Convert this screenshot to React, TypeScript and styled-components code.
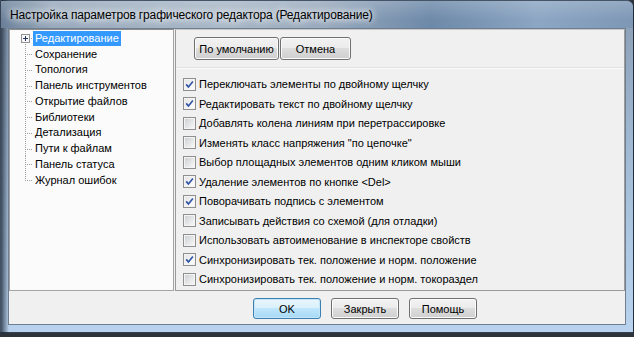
import styled, { createGlobalStyle } from 'styled-components';

const GlobalStyle = createGlobalStyle`
	html, body {
		margin: 0;
		padding: 0;
		background: #2d333b;
	}
	* {
		box-sizing: border-box;
	}
`;

const Screen = styled.div`
	width: 634px;
	height: 337px;
	background: #2d333b;
	overflow: hidden;
`;

const Window = styled.div`
	width: 634px;
	height: 333px;
	display: flex;
	flex-direction: column;
	border-radius: 0 7px 0 0;
	border: 1px solid rgba(20, 30, 45, 0.7);
	background:
		linear-gradient(90deg, rgba(25, 35, 50, 0.75) 0, rgba(25, 35, 50, 0) 8px),
		linear-gradient(180deg, #7f95ad 0, #8ea3ba 28px, #a6bfd9 55%, #b9d3ef 100%);
	font-family: "Liberation Sans", Arial, sans-serif;
`;

const TitleBar = styled.div`
	height: 27px;
	display: flex;
	align-items: center;
	padding-left: 9px;
	font-size: 12px;
	color: #000;
	background:
		linear-gradient(180deg, rgba(255, 255, 255, 0.18), rgba(255, 255, 255, 0) 70%),
		linear-gradient(90deg, #6a8099 0%, #97a9bc 8%, #a9b8c8 35%, #9aabbe 50%, #6d89a9 68%, #8ca6c3 85%, #7d97b5 100%);
	border-radius: 0 6px 0 0;
`;

const TitleText = styled.span`
	letter-spacing: -0.15px;
	text-shadow: 0 0 6px rgba(255, 255, 255, 0.95), 0 0 10px rgba(255, 255, 255, 0.8), 0 0 14px rgba(255, 255, 255, 0.6);
	white-space: nowrap;
`;

const Client = styled.div`
	margin: 0 7px 7px 7px;
	flex: 1;
	display: flex;
	flex-direction: column;
	background: #f0f0f0;
	border: 1px solid #6f7f90;
	font-size: 11px;
`;

const Panels = styled.div`
	height: 262px;
	display: flex;
	gap: 1px;
`;

const TreePanel = styled.div`
	width: 165px;
	background: #fbfbfb;
	border: 1px solid #a3a3a3;
	border-top-color: #8c8c8c;
	padding: 0.4px 0 0 11px;
	font-size: 11px;
`;

const TreeRow = styled.div`
	height: 15.75px;
	display: flex;
	align-items: center;
`;

const Connector = styled.span<{ $first?: boolean; $last?: boolean }>`
	position: relative;
	width: 12px;
	height: 100%;
	flex: none;

	&::before {
		content: '';
		position: absolute;
		left: 4px;
		width: 1px;
		top: ${(p) => (p.$first ? '12px' : '0')};
		bottom: ${(p) => (p.$last ? '7px' : '0')};
		background-image: linear-gradient(to bottom, #a0a0a0 50%, transparent 50%);
		background-size: 1px 2px;
	}

	&::after {
		content: '';
		position: absolute;
		top: 8px;
		left: ${(p) => (p.$first ? '9px' : '5px')};
		right: 0;
		height: 1px;
		background-image: linear-gradient(to right, #a0a0a0 50%, transparent 50%);
		background-size: 2px 1px;
		background-position: 1px 0;
	}
`;

const Expander = styled.svg`
	position: absolute;
	left: 0;
	top: 4px;
	z-index: 1;
`;

const TreeLabel = styled.span<{ $selected?: boolean }>`
	padding: 0 2px;
	line-height: 15px;
	white-space: nowrap;
	color: ${(p) => (p.$selected ? '#fff' : '#000')};
	background: ${(p) => (p.$selected ? '#3399ff' : 'transparent')};
`;

const OptionsPanel = styled.div`
	flex: 1;
	display: flex;
	flex-direction: column;
	border: 1px solid #9b9b9b;
	border-top-color: #c8c8c8;
	background: #f0f0f0;
`;

const Toolbar = styled.div`
	height: 38px;
	display: flex;
	gap: 1px;
	padding: 7px 0 0 18px;
	border-bottom: 1px solid #e1e1e1;
	box-shadow: 0 1px 0 #fafafa;
`;

const Button = styled.button<{ $w: number; $h: number; $default?: boolean }>`
	width: ${(p) => p.$w}px;
	height: ${(p) => p.$h}px;
	padding: 0;
	font-family: "Liberation Sans", Arial, sans-serif;
	font-size: 11px;
	color: #000;
	border-radius: 3px;
	border: 1px solid ${(p) => (p.$default ? '#3c7fb1' : '#707070')};
	box-shadow: inset 0 0 0 1px ${(p) => (p.$default ? '#c4e6f8' : '#fbfbfb')};
	background: ${(p) =>
		p.$default
			? 'linear-gradient(180deg, #eaf6fd 0%, #d9f0fc 49%, #bee6fd 50%, #a7d9f5 100%)'
			: 'linear-gradient(180deg, #f2f2f2 0%, #ebebeb 49%, #dddddd 50%, #cfcfcf 100%)'};
`;

const OptionList = styled.div`
	padding: 6.25px 0 0 7px;
	display: flex;
	flex-direction: column;
`;

const OptionRow = styled.label`
	height: 19.5px;
	display: flex;
	align-items: center;
	gap: 3px;
	white-space: nowrap;
`;

const BottomBar = styled.div`
	flex: 1;
	display: flex;
	gap: 10px;
	padding: 7px 0 0 244px;
`;

const treeItems = [
	'Редактирование',
	'Сохранение',
	'Топология',
	'Панель инструментов',
	'Открытие файлов',
	'Библиотеки',
	'Детализация',
	'Пути к файлам',
	'Панель статуса',
	'Журнал ошибок',
];

const options: [string, boolean][] = [
	['Переключать элементы по двойному щелчку', true],
	['Редактировать текст по двойному щелчку', true],
	['Добавлять колена линиям при перетрассировке', false],
	['Изменять класс напряжения "по цепочке"', false],
	['Выбор площадных элементов одним кликом мыши', false],
	['Удаление элементов по кнопке <Del>', true],
	['Поворачивать подпись с элементом', true],
	['Записывать действия со схемой (для отладки)', false],
	['Использовать автоименование в инспекторе свойств', false],
	['Синхронизировать тек. положение и норм. положение', true],
	['Синхронизировать тек. положение и норм. токораздел', false],
];

const CheckBox = ({ checked }: { checked: boolean }) => (
	<svg width="13" height="13" viewBox="0 0 13 13" style={{ flex: 'none' }}>
		<defs>
			<linearGradient id={checked ? 'cbOn' : 'cbOff'} x1="0" y1="0" x2="1" y2="1">
				<stop offset="0" stopColor={checked ? '#e6e6e6' : '#cfd1d4'} />
				<stop offset="1" stopColor={checked ? '#fdfdfd' : '#f7f7f7'} />
			</linearGradient>
		</defs>
		<rect x="0.5" y="0.5" width="12" height="12" fill="#f4f4f4" stroke="#8f8f8f" />
		<rect x="2" y="2" width="9" height="9" fill={`url(#${checked ? 'cbOn' : 'cbOff'})`} />
		{checked && (
			<path d="M3.2 6.4 L5.4 8.9 L9.9 3.4" fill="none" stroke="#2f53a6" strokeWidth="1.6" />
		)}
	</svg>
);

const App = () => {
	return (
		<>
			<GlobalStyle />
			<Screen>
				<Window>
					<TitleBar>
						<TitleText>Настройка параметров графического редактора (Редактирование)</TitleText>
					</TitleBar>
					<Client>
						<Panels>
							<TreePanel>
								{treeItems.map((item, i) => (
									<TreeRow key={item}>
										<Connector $first={i === 0} $last={i === treeItems.length - 1}>
											{i === 0 && (
												<Expander width="9" height="9" viewBox="0 0 9 9">
													<rect x="0.5" y="0.5" width="8" height="8" fill="#f8f8f8" stroke="#919191" />
													<path d="M2 4.5 H7 M4.5 2 V7" stroke="#1f3566" strokeWidth="1" />
												</Expander>
											)}
										</Connector>
										<TreeLabel $selected={i === 0}>{item}</TreeLabel>
									</TreeRow>
								))}
							</TreePanel>
							<OptionsPanel>
								<Toolbar>
									<Button $w={85} $h={23}>По умолчанию</Button>
									<Button $w={71} $h={23}>Отмена</Button>
								</Toolbar>
								<OptionList>
									{options.map(([text, checked]) => (
										<OptionRow key={text}>
											<CheckBox checked={checked} />
											<span>{text}</span>
										</OptionRow>
									))}
								</OptionList>
							</OptionsPanel>
						</Panels>
						<BottomBar>
							<Button $w={68} $h={21} $default>OK</Button>
							<Button $w={68} $h={21}>Закрыть</Button>
							<Button $w={68} $h={21}>Помощь</Button>
						</BottomBar>
					</Client>
				</Window>
			</Screen>
		</>
	);
};

export default App;
